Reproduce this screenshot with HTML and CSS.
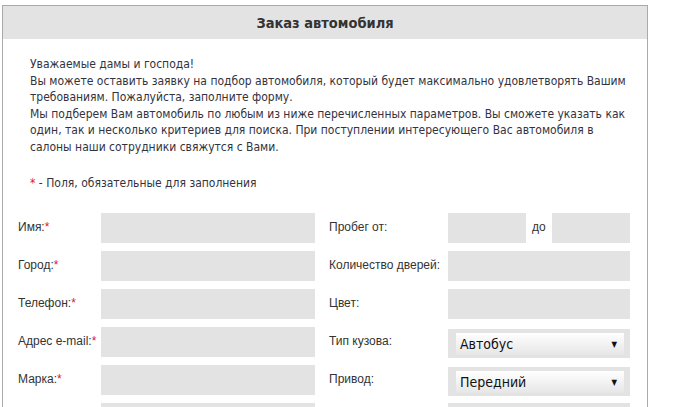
FILE: index.html
```html
<!DOCTYPE html>
<html lang="ru">
<head>
<meta charset="utf-8">
<title>Заказ автомобиля</title>
<link rel="stylesheet" href="styles.css">
</head>
<body>
<div class="order">
  <h2 class="order-title">Заказ автомобиля</h2>
  <div class="intro">
    Уважаемые дамы и господа!<br>
    Вы можете оставить заявку на подбор автомобиля, который будет максимально удовлетворять Вашим<br>
    требованиям. Пожалуйста, заполните форму.<br>
    Мы подберем Вам автомобиль по любым из ниже перечисленных параметров. Вы сможете указать как<br>
    один, так и несколько критериев для поиска. При поступлении интересующего Вас автомобиля в<br>
    салоны наши сотрудники свяжутся с Вами.
  </div>
  <p class="note"><span class="req">*</span> - Поля, обязательные для заполнения</p>
  <form class="order-form">
    <label class="lbl">Имя:<span class="req">*</span></label>
    <input class="field" type="text">
    <label class="lbl lbl-right">Пробег от:</label>
    <div class="range">
      <input class="field field-small" type="text">
      <span class="range-sep">до</span>
      <input class="field field-small" type="text">
    </div>

    <label class="lbl">Город:<span class="req">*</span></label>
    <input class="field" type="text">
    <label class="lbl lbl-right">Количество дверей:</label>
    <input class="field" type="text">

    <label class="lbl">Телефон:<span class="req">*</span></label>
    <input class="field" type="text">
    <label class="lbl lbl-right">Цвет:</label>
    <input class="field" type="text">

    <label class="lbl">Адрес e-mail:<span class="req">*</span></label>
    <input class="field" type="text">
    <label class="lbl lbl-right">Тип кузова:</label>
    <div class="select-wrap"><div class="select"><span>Автобус</span><span class="arrow">▼</span></div></div>

    <label class="lbl">Марка:<span class="req">*</span></label>
    <input class="field" type="text">
    <label class="lbl lbl-right">Привод:</label>
    <div class="select-wrap"><div class="select"><span>Передний</span><span class="arrow">▼</span></div></div>

    <span class="lbl"></span>
    <input class="field" type="text">
    <span class="lbl lbl-right"></span>
    <input class="field" type="text">
  </form>
</div>
</body>
</html>
```
FILE: styles.css
```css
html, body {
  margin: 0;
  padding: 0;
  background: #fff;
}
body {
  padding: 5px 0 0 2px;
  height: 402px;
  overflow: hidden;
}
.order {
  width: 644px;
  border: 1px solid #aaaaaa;
  border-bottom: none;
  min-height: 420px;
  box-sizing: content-box;
}
.order-title {
  margin: 0;
  height: 33px;
  line-height: 34px;
  background: #e3e3e3;
  text-align: center;
  font-family: "Liberation Sans Narrow", "DejaVu Sans Condensed", "Liberation Sans", sans-serif;
  font-weight: bold;
  font-size: 14.5px;
  color: #333;
}
.intro {
  padding: 17px 0 0 27px;
  font-family: "DejaVu Sans Condensed", "DejaVu Sans", sans-serif;
  font-size: 12px;
  line-height: 16.6px;
  color: #333340;
  white-space: nowrap;
}
.note {
  margin: 19px 0 0 27px;
  font-family: "DejaVu Sans Condensed", "DejaVu Sans", sans-serif;
  font-size: 12px;
  line-height: 16.6px;
  color: #333340;
}
.req {
  color: #e8103a;
}
.order-form {
  margin: 22px 0 0 15px;
  display: grid;
  grid-template-columns: 83px 214px 133px 182px;
  grid-auto-rows: 30px;
  row-gap: 8px;
  font-family: "Liberation Sans", Arial, sans-serif;
  font-size: 12px;
  color: #333;
}
.lbl {
  display: flex;
  align-items: center;
  white-space: nowrap;
  padding-bottom: 3px;
}
.lbl-right {
  padding-left: 14px;
}
.field {
  display: block;
  margin: 0;
  border: none;
  background: #e3e3e3;
  height: 30px;
  width: 100%;
  box-sizing: border-box;
  padding: 0 6px;
  outline: none;
}
.range {
  display: flex;
  align-items: center;
}
.field-small {
  width: 78px;
}
.range-sep {
  width: 26px;
  padding-left: 6px;
  padding-bottom: 3px;
  box-sizing: border-box;
}
.select-wrap {
  margin-top: 2px;
  height: 29px;
  background: #e3e3e3;
  padding: 4px 6px 3px 8px;
  box-sizing: border-box;
}
.select {
  height: 22px;
  display: flex;
  align-items: center;
  justify-content: space-between;
  padding: 0 7px 0 4px;
  background: linear-gradient(#ffffff, #e6e6e6);
  font-family: "DejaVu Sans Condensed", "DejaVu Sans", sans-serif;
  font-size: 14px;
  color: #111;
}
.arrow {
  font-size: 8px;
  color: #111;
}
```
